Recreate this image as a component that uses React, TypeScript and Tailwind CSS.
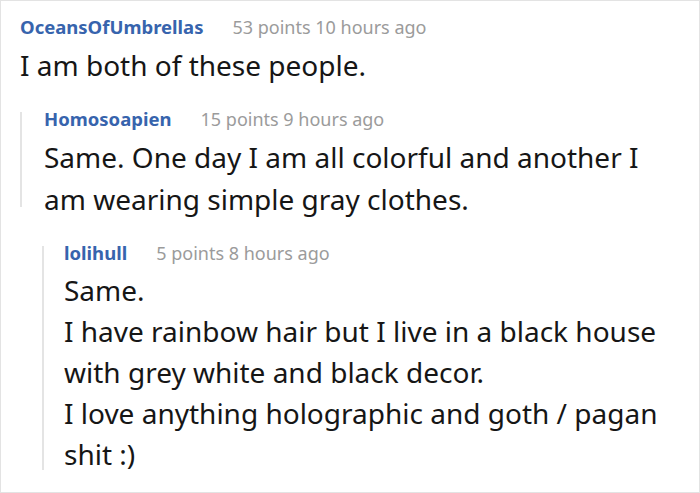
import React from 'react';

type Props = {
    user: string;
    meta: string;
    lineHeight: string;
    children: React.ReactNode;
};

const Comment: React.FC<Props> = ({ user, meta, lineHeight, children }) => (
    <>
        <div className="flex items-baseline gap-[29px] leading-[14px]">
            <span className="text-[18.5px] font-bold text-[#3764ad]">{user}</span>
            <span className="text-[18px] text-[#9b9b9b]">{meta}</span>
        </div>
        <div className={`mt-[10px] text-[28px] text-[#161616] ${lineHeight}`}>{children}</div>
    </>
);

export default function App() {
    return (
        <div
            className="w-[700px] h-[493px] bg-white border border-[#e3e3e3] overflow-hidden"
            style={{ fontFamily: '"Noto Sans", sans-serif' }}
        >
            <div className="pl-[19px] pt-[19px]">
                {/* top comment */}
                <div className="flex flex-col">
                    <Comment user="OceansOfUmbrellas" meta="53 points 10 hours ago" lineHeight="leading-[42px]">
                        I am both of these people.
                    </Comment>
                </div>

                {/* first reply */}
                <div className="mt-[26px] flex flex-col border-l-2 border-[#e4e4e4] pl-[22px] pb-0">
                    <Comment user="Homosoapien" meta="15 points 9 hours ago" lineHeight="leading-[42px] -mb-[13px]">
                        Same. One day I am all colorful and another I
                        <br />
                        am wearing simple gray clothes.
                    </Comment>
                </div>

                {/* nested reply */}
                <div className="ml-[22px] mt-[39px] flex flex-col border-l-2 border-[#e4e4e4] pl-[20px]">
                    <Comment user="lolihull" meta="5 points 8 hours ago" lineHeight="leading-[41px] -mb-[5px]">
                        Same.
                        <br />
                        I have rainbow hair but I live in a black house
                        <br />
                        with grey white and black decor.
                        <br />
                        I love anything holographic and goth / pagan
                        <br />
                        shit :)
                    </Comment>
                </div>
            </div>
        </div>
    );
}
